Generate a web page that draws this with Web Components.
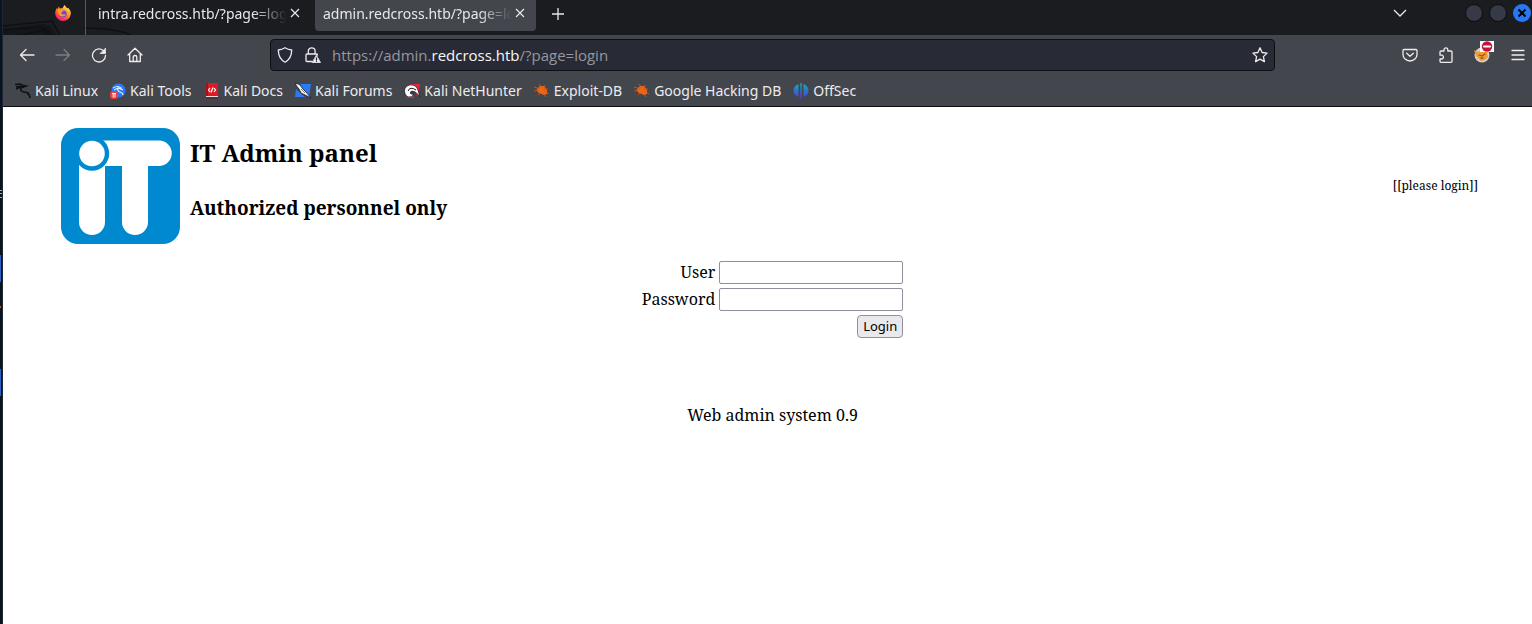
<!DOCTYPE html>
<html lang="en">
<head>
<meta charset="utf-8">
<title>IT Admin panel</title>
<style>
html, body { margin: 0; min-height: 100%; }
body { display: flex; min-height: 100vh; background: #fff; font-family: "Noto Sans", sans-serif; }
</style>
</head>
<body>
<desktop-edge></desktop-edge>
<browser-window>
  <tab-strip></tab-strip>
  <nav-toolbar></nav-toolbar>
  <bookmark-bar>
    <bookmark-item icon="dragon">Kali Linux</bookmark-item>
    <bookmark-item icon="tools">Kali Tools</bookmark-item>
    <bookmark-item icon="docs">Kali Docs</bookmark-item>
    <bookmark-item icon="forums">Kali Forums</bookmark-item>
    <bookmark-item icon="hunter">Kali NetHunter</bookmark-item>
    <bookmark-item icon="bug">Exploit-DB</bookmark-item>
    <bookmark-item icon="bug">Google Hacking DB</bookmark-item>
    <bookmark-item icon="offsec">OffSec</bookmark-item>
  </bookmark-bar>
  <admin-page>
    <admin-header slot="header">
      <h2 slot="title">IT Admin panel</h2>
      <h3 slot="subtitle">Authorized personnel only</h3>
      <span slot="status">[[please login]]</span>
    </admin-header>
    <login-form></login-form>
    <span slot="footer">Web admin system 0.9</span>
  </admin-page>
</browser-window>
<script>
function define(name, html, setup) {
  const template = document.createElement('template');
  template.innerHTML = html;
  customElements.define(name, class extends HTMLElement {
    constructor() {
      super();
      this.attachShadow({ mode: 'open' }).append(template.content.cloneNode(true));
    }
    connectedCallback() { if (setup) setup(this); }
  });
}

define('desktop-edge', `
<style>
:host { flex: none; width: 3px; background: #0a1320; border-right: 1px solid #1c2733; box-sizing: border-box; }
svg { display: block; }
</style>
<svg width="2" height="400" aria-hidden="true">
  <path d="M0 190h2v1H0zM0 193h2v1H0zM0 197h2v1H0z" fill="#a9a9ae"/>
  <path d="M0 255h1v27H0zM0 369h1v27H0z" fill="#2a62c8"/>
  <path d="M0 306h1v2H0z" fill="#b0602e"/>
</svg>`);

define('browser-window', `
<style>
:host { flex: 1; min-width: 0; display: flex; flex-direction: column; background: #fff; }
</style>
<slot></slot>`);

define('browser-tab', `
<style>
:host { display: flex; align-items: flex-start; box-sizing: border-box; width: 221px; height: 31px; padding: 0 8px; color: #e8e8ea; font-size: 14px; border-radius: 0 0 4px 4px; }
:host([active]) { background: #44464d; }
a { flex: 1; min-width: 0; overflow: hidden; white-space: nowrap; line-height: 28px; color: inherit; text-decoration: none;
  -webkit-mask-image: linear-gradient(to right, #000 82%, transparent); mask-image: linear-gradient(to right, #000 82%, transparent); }
button { flex: none; width: 16px; height: 26px; margin: 0; padding: 0; border: 0; background: none; color: inherit; display: flex; align-items: center; justify-content: center; }
</style>
<a href="#"><slot></slot></a>
<button aria-label="Close tab"><svg width="10" height="10" viewBox="0 0 10 10"><path d="M1 1l8 8M9 1L1 9" stroke="currentColor" stroke-width="1.2"/></svg></button>`);

define('tab-strip', `
<style>
:host { position: relative; display: flex; height: 35px; background: #1b1c20; color: #e8e8ea; overflow: hidden; }
.art { position: absolute; left: 0; top: 0; }
.pinned { display: flex; justify-content: flex-end; box-sizing: border-box; width: 83px; padding: 5px 14px 0 0; border-right: 1px solid #5b5c62; position: relative; }
browser-tab { position: relative; }
browser-tab + browser-tab { margin-left: 4px; }
.first { margin-left: 4px; }
button { display: flex; align-items: center; justify-content: center; padding: 0; border: 0; background: none; color: inherit; height: 26px; }
.add { width: 44px; height: 28px; }
.grow { flex: 1; }
.list { width: 20px; margin-right: 55px; }
.win { box-sizing: border-box; width: 18px; height: 18px; margin: 4px 6px 0 0; border-radius: 50%; background: #363a47; border: 1px solid #0b0b0d; }
.close { width: 18px; margin: 4px 1px 0 0; background: #2878f6; border: 0; color: #000; }
</style>
<svg class="art" width="140" height="35" aria-hidden="true">
  <path d="M0 29L40 24 47 26 54 35H0z" fill="#141518"/>
  <path d="M0 26L49 21 57 35M0 30L38 27 49 34M18 35L40 30 46 35M80 28Q112 28 128 35" fill="none" stroke="#0f1012" stroke-width="1.5"/>
</svg>
<div class="pinned">
  <svg width="16" height="16" viewBox="0 0 16 16" role="img" aria-label="Firefox">
    <defs><linearGradient id="f" x1=".8" y1="0" x2=".2" y2="1"><stop offset="0" stop-color="#fff04a"/><stop offset=".4" stop-color="#ff9a20"/><stop offset=".75" stop-color="#fb3e4c"/><stop offset="1" stop-color="#e31587"/></linearGradient></defs>
    <path d="M9.5 0c1 1 1.300 2 3 3.300l.6-.6c1.700 1.500 2.900 3.700 2.700 6.100A7.800 7.800 0 0 1 8 16 7.800 7.800 0 0 1 .2 8.500c0-2.300.6-4 1.600-5.500l.7 1.200 1.300-2.600 1 2.100c.8-.4 1.600-.4 2.500-.3C8 2.300 8.600 1.200 9.500 0z" fill="url(#f)"/>
    <circle cx="8.200" cy="8.700" r="3.500" fill="#6d46dc"/>
    <path d="M3 5c2-1 3.200-.8 4.600.6H9c-.3 1-1.300 1.200-2.200 1.400-.8.700-.5 2 1 2.500 1.400.4 2.200-.4 3.200-.3-1 2.600-4.600 3-6.600.8C3 8.500 2.700 6.600 3 5z" fill="#ff9a2a"/>
  </svg>
</div>
<browser-tab class="first">intra.redcross.htb/?page=login</browser-tab>
<browser-tab active>admin.redcross.htb/?page=login</browser-tab>
<button class="add" aria-label="New tab"><svg width="12" height="12" viewBox="0 0 12 12"><path d="M6 0v12M0 6h12" stroke="currentColor" stroke-width="1.300"/></svg></button>
<span class="grow"></span>
<button class="list" aria-label="List all tabs"><svg width="14" height="8" viewBox="0 0 14 8"><path d="M1 1l6 6 6-6" fill="none" stroke="currentColor" stroke-width="1.300"/></svg></button>
<button class="win" aria-label="Minimize"></button>
<button class="win" aria-label="Maximize"></button>
<button class="win close" aria-label="Close"><svg width="10" height="10" viewBox="0 0 10 10"><path d="M1.500 1.500l7 7M8.500 1.500l-7 7" stroke="currentColor" stroke-width="2"/></svg></button>`);

define('nav-toolbar', `
<style>
:host { display: flex; align-items: center; height: 40px; background: #44464d; color: #ededef; box-sizing: border-box; padding: 0 6px; }
button { position: relative; flex: none; display: flex; align-items: center; justify-content: center; width: 36px; height: 32px; padding: 0; border: 0; background: none; color: inherit; }
svg { fill: none; stroke: currentColor; stroke-width: 1.300; stroke-linecap: round; stroke-linejoin: round; }
.off { color: #7d7e83; }
.url { display: flex; align-items: center; box-sizing: border-box; flex: 1; min-width: 0; height: 32px; margin: 0 117px; background: #282a36; border: 1px solid #0e0f13; border-radius: 4px; }
.url button { width: 28px; height: 28px; }
.address { flex: 1; padding-left: 5px; font: 15px/28px "Open Sans", "Noto Sans", sans-serif; color: #96979d; text-decoration: none; }
.address b { font-weight: 400; color: #f8f8f8; }
.end { display: flex; }
.end .menu { margin-right: -10px; }
.badge { position: absolute; right: 6px; top: 2px; }
</style>
<button aria-label="Back"><svg width="16" height="16" viewBox="0 0 16 16"><path d="M15 8H1.500M7 2.500L1.500 8 7 13.500"/></svg></button>
<button class="off" aria-label="Forward"><svg width="16" height="16" viewBox="0 0 16 16"><path d="M1 8h13.500M9 2.500L14.500 8 9 13.500"/></svg></button>
<button aria-label="Reload"><svg width="16" height="16" viewBox="0 0 16 16"><path d="M13 4.300A6.500 6.500 0 1 0 14.500 8.500"/><path d="M14.500 1.500v5h-5z" fill="currentColor" stroke-width=".8"/></svg></button>
<button aria-label="Home"><svg width="16" height="16" viewBox="0 0 16 16"><path d="M1 8l7-6.800L15 8M2.700 6.700v7.800h10.600V6.700M6.200 14.500V10q0-1.500 1.800-1.500T9.800 10v4.500"/></svg></button>
<div class="url">
  <button aria-label="Tracking protection"><svg width="16" height="16" viewBox="0 0 16 16"><path d="M8 .8q3 1.900 6.700 2.200 0 8.500-6.700 12.200Q1.300 11.500 1.300 3 5 2.700 8 .8z"/></svg></button>
  <button aria-label="Connection security"><svg width="16" height="16" viewBox="0 0 16 16"><path d="M3.300 7V4.200a3.400 3.400 0 0 1 6.800 0V7M7 14.500H2q-1 0-1-1V8q0-1 1-1h9.500q1 0 1 1"/><path d="M11.500 8.500l4 7h-8z" fill="currentColor" stroke-width=".8"/><path d="M11.500 10.800v2M11.500 14.200v.1" stroke="#282a36"/></svg></button>
  <a class="address" href="#">https://admin.<b>redcross.htb</b>/?page=login</a>
  <button aria-label="Bookmark this page"><svg width="16" height="16" viewBox="0 0 16 16"><path d="M8 .8l2.100 4.700 5 .6-3.700 3.500 1 5L8 12.100l-4.400 2.500 1-5L.9 6.100l5-.6z"/></svg></button>
</div>
<div class="end">
  <button aria-label="Save to Pocket"><svg width="16" height="16" viewBox="0 0 16 16"><path d="M2 2.500h12q1 0 1 1V7.500a7 6.500 0 0 1-14 0v-4q0-1 1-1zM4.700 6.200L8 9.300l3.300-3.100"/></svg></button>
  <button aria-label="Extensions"><svg width="16" height="16" viewBox="0 0 16 16"><path d="M2 7V5q0-1 1-1h3V2.700a1.900 1.900 0 0 1 3.800 0V4H13q1 0 1 1v9.500q0 .8-1 .8H3q-1 0-1-1V12h1.500a1.900 1.900 0 0 0 0-3.800H2z"/></svg></button>
  <button aria-label="FoxyProxy, disabled"><svg width="16" height="16" viewBox="0 0 16 16"><circle cx="8" cy="8" r="7.500" fill="#d5d0c6" stroke="none"/><path d="M0 3l4 2 5-2 4 2 1 5-3 3-4 1-5-5z" fill="#f39a33" stroke="none"/><path d="M5 8l3 1 3-2M7 11l2 0" stroke="#8f5526"/></svg>
    <svg class="badge" width="14" height="11" viewBox="0 0 14 11"><path d="M0 0h14v11H0z" fill="#fff" stroke="none"/><circle cx="7" cy="5.500" r="5.200" fill="#c4143b" stroke="none"/><path d="M4 5.500h6" stroke="#fff" stroke-width="2"/></svg></button>
  <button class="menu" aria-label="Menu"><svg width="14" height="12" viewBox="0 0 14 12"><path d="M1 1.500h12M1 6h12M1 10.500h12"/></svg></button>
</div>`);

define('bookmark-bar', `
<style>
:host { display: flex; gap: 12px; align-items: center; box-sizing: border-box; height: 32px; padding: 0 12px; background: #44464d; border-bottom: 1px solid #0e0f13; color: #ececee; }
</style>
<slot></slot>`);

const bookmarkIcons = {
  dragon: '<path d="M0 1.500l5-.5 3 1.500 3 .5-2 .8L5 3.500 1 3.800M1 6q3-2 6-1.500l2-.5M6.500 4.500Q4.500 7.500 8 8.700l4 .8q2.500 1 3 5.500M9 9q4 0 4.500 3" fill="none" stroke="#101115" stroke-width="1.600"/>',
  tools: '<circle cx="8.500" cy="7.500" r="7" fill="#2a78f4"/><path d="M3 5q5-3 8 0l-3 0q-1 3 2 4 3 1 3 3M4 7l4-2 5 2" fill="none" stroke="#d9e9ff" stroke-width="1.200"/><rect y="8" width="8" height="8" rx="3" fill="#ef3d3d"/><path d="M2 10.500h4M3.200 10.500v4M5 10.500v4" stroke="#fff"/>',
  docs: '<path d="M2 0h12v13H2z" fill="#df1922"/><path d="M2 0h2v14H2z" fill="#a50f1b"/><path d="M2 13h12v1H2z" fill="#e4e4e8"/><path d="M2 14.500h12v1H2z" fill="#7a101a"/><path d="M6 5L4.500 7 6 9M10 5l1.500 2L10 9M9 4.500L7 9.500" fill="none" stroke="#fff" stroke-width="1.200"/>',
  forums: '<path d="M5 1h11l-2 13-4-3zM1 6l9 8H0z" fill="#2a7bf3"/><path d="M0 1q3-1 5 1l3 4 3 3 5 6-6-3-4-2-2-4z" fill="#f4f4f4" stroke="#16171c" stroke-width=".8"/><path d="M6 6l4 4" stroke="#777"/>',
  hunter: '<path d="M5 1h11l-2 13zM1 8l2 7h8z" fill="#e3263b"/><path d="M1 11Q-1 4 5 2q7-1 9 5l2 7q-4-6-8-6-3 1-1 3l3 0q-2 4-6 3-2-1-3-3z" fill="#fff" stroke="#16171c" stroke-width=".8"/><path d="M4 8q2-5 8-1" fill="none" stroke="#16171c"/>',
  bug: '<path d="M3 6l3-3 4 0 3 4 0 4-3 1-5-2-2-2z" fill="#ee6516"/><path d="M0 4l6 2M5 1l3 4M11 2l-1 4M14 6l-5 1M15 11l-5-3M12 14l-3-4M4 12l3-3M0 8l5-1" stroke="#d75a15" stroke-width=".8"/>',
  offsec: '<defs><linearGradient id="o" x1="0" y1="0" x2="0" y2="1"><stop offset="0" stop-color="#14b4b8"/><stop offset=".5" stop-color="#2b72c8"/><stop offset="1" stop-color="#6c30d8"/></linearGradient></defs><path d="M5.500 1v13Q.5 12 .5 7.500T5.500 1zM7.300 0h1.400v16H7.300zM10.500 1q5 2 5 6.500t-5 6.500z" fill="url(#o)"/>'
};
define('bookmark-item', `
<style>
:host { display: block; flex: none; }
a { display: flex; align-items: center; gap: 4px; font-size: 14px; line-height: 20px; color: inherit; text-decoration: none; white-space: nowrap; }
svg { flex: none; }
</style>
<a href="#"><svg width="16" height="16" viewBox="0 0 16 16" aria-hidden="true"></svg><slot></slot></a>`,
host => { host.shadowRoot.querySelector('svg').innerHTML = bookmarkIcons[host.getAttribute('icon')]; });

define('admin-page', `
<style>
:host { display: flex; flex-direction: column; align-items: stretch; padding: 20px 48px 20px 58px; color: #000; font: 16px/22px "Noto Serif", "DejaVu Serif", serif; }
main { display: flex; justify-content: center; margin-top: 16px; }
footer { margin-top: 66px; text-align: center; }
</style>
<slot name="header"></slot>
<main><slot></slot></main>
<footer><slot name="footer"></slot></footer>`);

define('admin-header', `
<style>
:host { display: flex; align-items: center; }
svg { flex: none; display: block; }
.titles { display: flex; flex-direction: column; gap: 26px; margin-left: 10px; padding-bottom: 14px; }
::slotted(h2) { margin: 0; font-size: 24px; line-height: 32px; }
::slotted(h3) { margin: 0; font-size: 19px; line-height: 26px; }
.status { margin-left: auto; padding-right: 6px; font-size: 12px; line-height: 18px; }
</style>
<svg width="119" height="118" viewBox="0 0 119 118" role="img" aria-label="IT">
  <rect y="1" width="119" height="116" rx="17" fill="#0089cf"/>
  <path d="M40 13.500h58a12.700 12.700 0 0 1 0 25.500H87V95a13 13 0 0 1-26 0V39H30z" fill="#fff"/>
  <path d="M18 34H44V95a13 13 0 0 1-26 0z" fill="#fff"/>
  <circle cx="31" cy="26.500" r="17.200" fill="#0089cf"/>
  <circle cx="31" cy="26.500" r="12.800" fill="#fff"/>
</svg>
<div class="titles"><slot name="title"></slot><slot name="subtitle"></slot></div>
<div class="status"><slot name="status"></slot></div>`);

define('login-form', `
<style>
:host { display: block; }
form { display: grid; grid-template-columns: auto 184px; gap: 4px; align-items: center; }
label { text-align: right; line-height: 23px; }
input { box-sizing: border-box; width: 100%; height: 23px; margin: 0; padding: 1px 4px; border: 1px solid #8f8f9d; border-radius: 2px; background: #fff; font: 13px "Noto Sans", sans-serif; }
button { grid-column: 2; justify-self: end; box-sizing: border-box; height: 23px; padding: 0 5px; border: 1px solid #8f8f9d; border-radius: 4px; background: #e9e9ed; color: #000; font: 13px/21px "Noto Sans", sans-serif; }
</style>
<form onsubmit="return false">
  <label for="user">User</label><input id="user" type="text" autocomplete="off">
  <label for="pass">Password</label><input id="pass" type="password" autocomplete="off">
  <button type="submit">Login</button>
</form>`);
</script>
</body>
</html>
